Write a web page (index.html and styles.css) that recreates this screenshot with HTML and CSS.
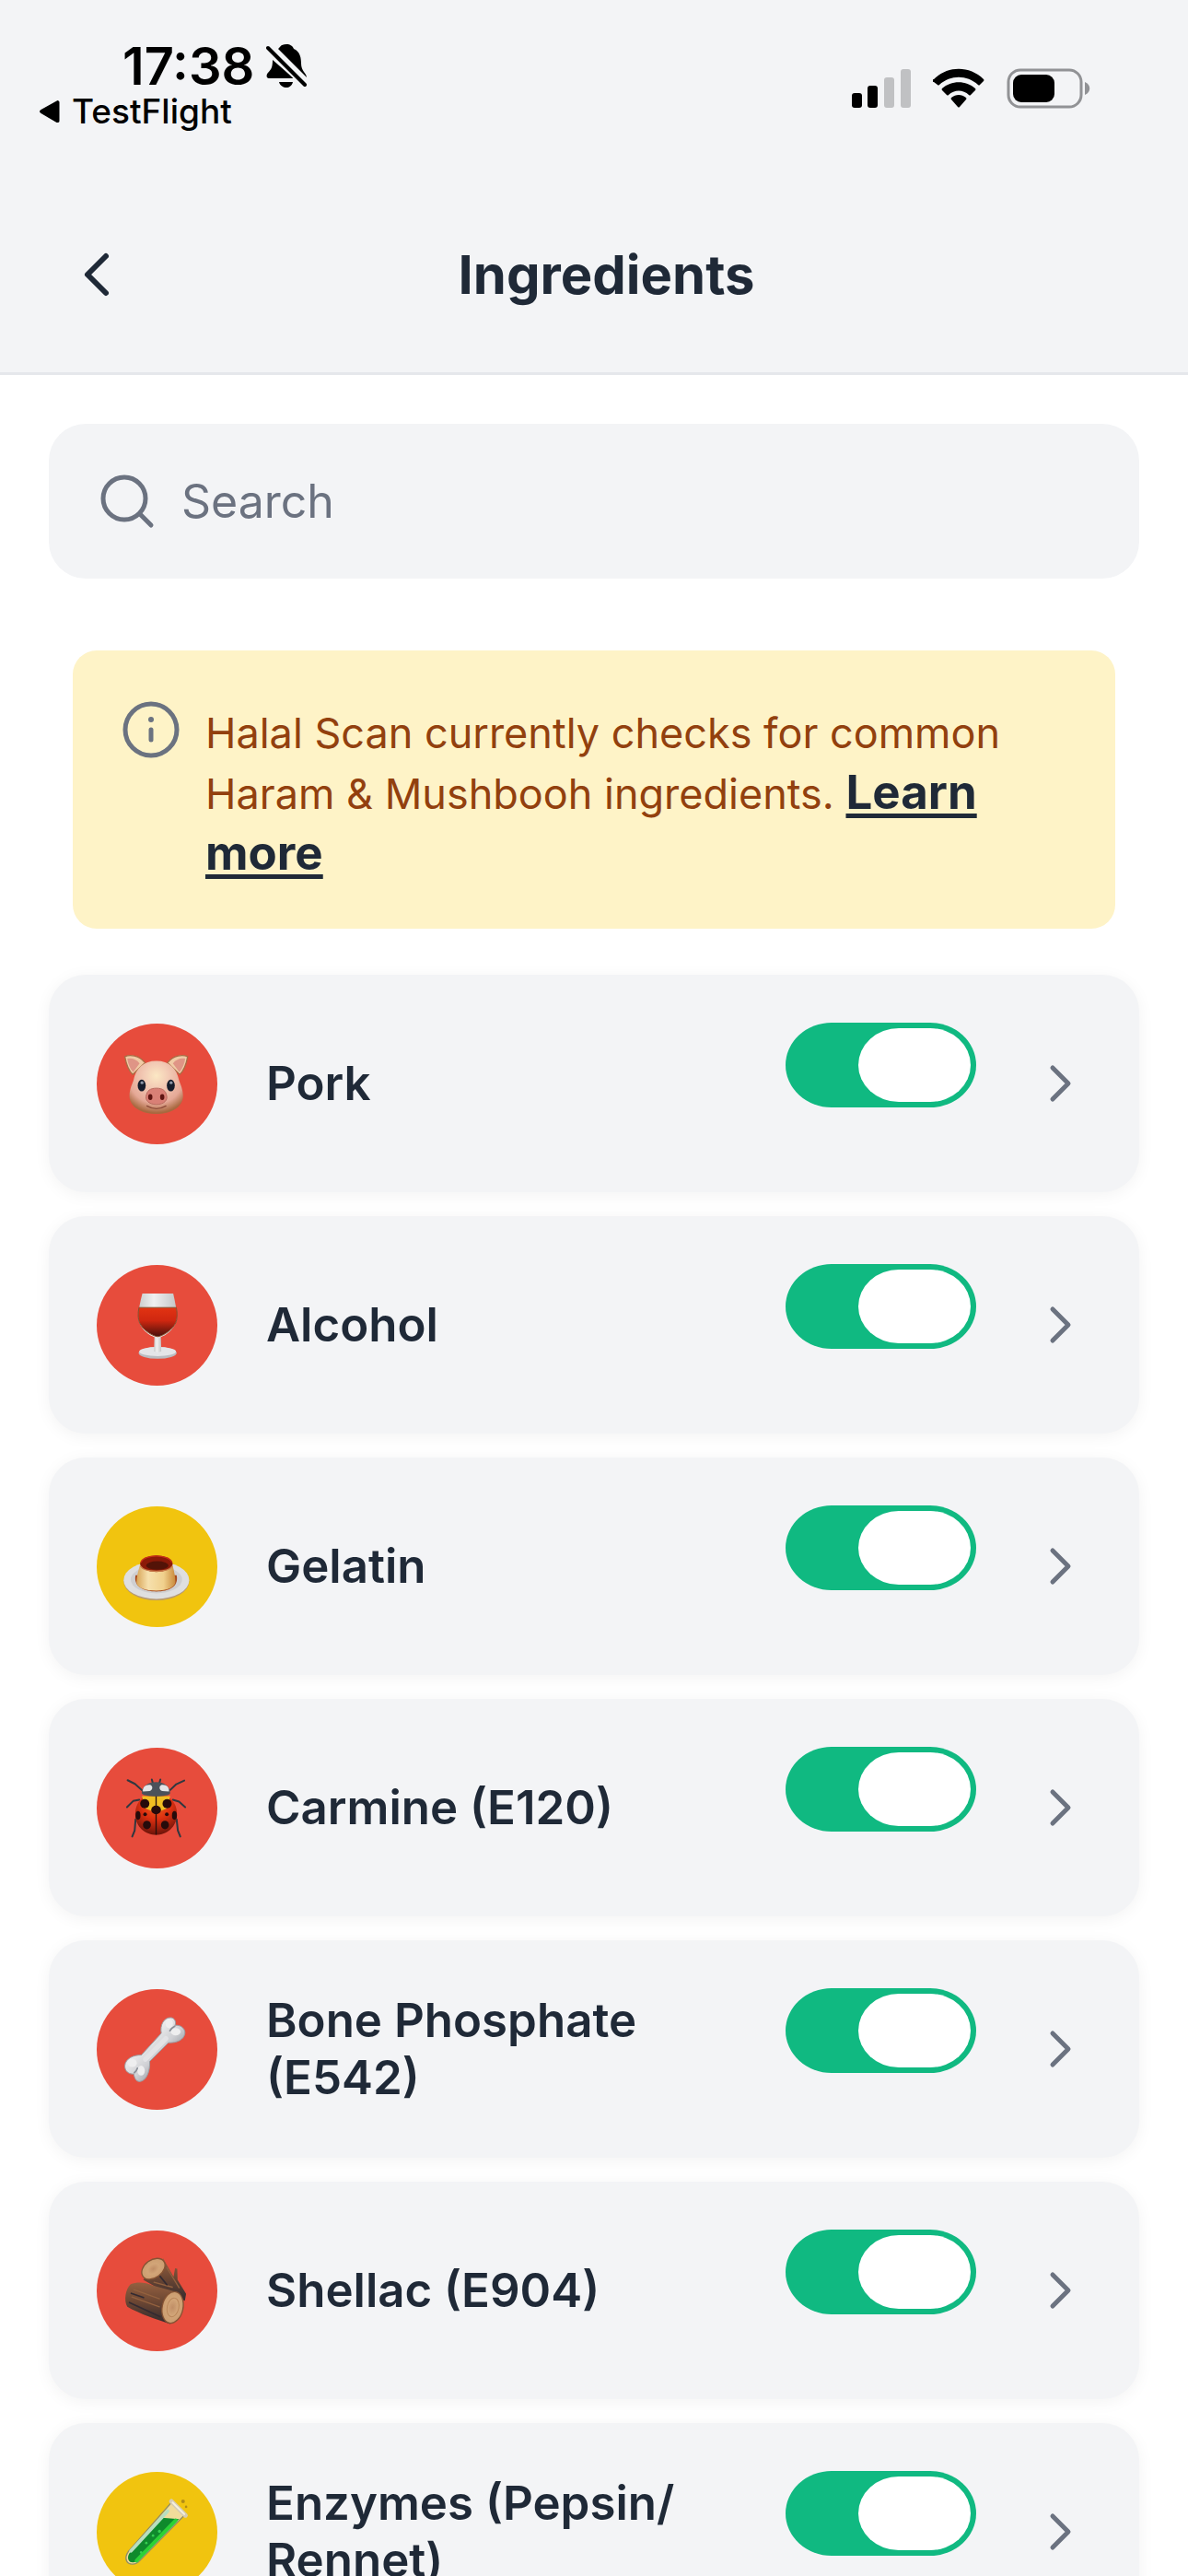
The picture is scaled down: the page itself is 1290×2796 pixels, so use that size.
FILE: index.html
```html
<!DOCTYPE html>
<html lang="en">
<head>
<meta charset="utf-8">
<meta name="viewport" content="width=device-width, initial-scale=1">
<title>Ingredients</title>
<link rel="stylesheet" href="styles.css">
</head>
<body>
<svg class="defs" aria-hidden="true">
  <defs>
    <symbol id="chevron" viewBox="0 0 48 48"><path d="M16 7 33 24 16 41" fill="none" stroke="currentColor" stroke-width="5" stroke-linecap="round" stroke-linejoin="round"/></symbol>
    <radialGradient id="pigSkin" cx=".5" cy=".28" r=".7"><stop offset="0" stop-color="#fbe8c4"/><stop offset=".35" stop-color="#f2c9b4"/><stop offset=".75" stop-color="#e5a896"/><stop offset="1" stop-color="#a8683f"/></radialGradient>
    <linearGradient id="wine" x2="0" y2="1"><stop offset="0" stop-color="#e23312"/><stop offset=".45" stop-color="#cf2710"/><stop offset="1" stop-color="#46100c"/></linearGradient>
    <linearGradient id="glass" x2="1" y2="0"><stop offset="0" stop-color="#c9cbcc"/><stop offset=".4" stop-color="#f0f0f0"/><stop offset="1" stop-color="#c3c5c6"/></linearGradient>
    <linearGradient id="custard" x2="1" y2="0"><stop offset="0" stop-color="#d8a558"/><stop offset=".3" stop-color="#f6e0ad"/><stop offset=".7" stop-color="#f0d08c"/><stop offset="1" stop-color="#c98a3c"/></linearGradient>
    <radialGradient id="shell" cx=".5" cy=".25" r=".75"><stop offset="0" stop-color="#f0651e"/><stop offset=".5" stop-color="#dc2f10"/><stop offset="1" stop-color="#6e140a"/></radialGradient>
    <linearGradient id="bone" x1="0" y1="0" x2="1" y2="1"><stop offset=".3" stop-color="#f4f4f4"/><stop offset=".55" stop-color="#cfd0d4"/><stop offset=".8" stop-color="#80858d"/></linearGradient>
    <linearGradient id="bark" x2="0" y2="1"><stop offset="0" stop-color="#946040"/><stop offset=".45" stop-color="#6d4733"/><stop offset="1" stop-color="#332a2e"/></linearGradient>
    <radialGradient id="rings"><stop offset="0" stop-color="#c08e66"/><stop offset=".5" stop-color="#d2a578"/><stop offset="1" stop-color="#cb9d70"/></radialGradient>
  </defs>
</svg>

<div class="app">
  <header class="header">
    <div class="status">
      <div class="status-left">
        <div class="clock">
          <span>17:38</span>
          <svg class="bell" viewBox="0 0 44 48" aria-hidden="true">
            <path d="M22 0c4 0 7 2 8 5 7 3 8 10 8 16 0 8 6 11 6 15L13 5c2-1 2-5 9-5ZM7 17 30 37H3c-3 0-3-4-1-6 4-4 5-7 5-14ZM14 41h15c-1 4-4 6-7 6s-7-2-8-6Z"/>
            <path d="M2 4 42 44" fill="none" stroke="#f3f4f6" stroke-width="8"/>
            <path d="M2 4 42 44" fill="none" stroke="#000" stroke-width="4" stroke-linecap="round"/>
          </svg>
        </div>
        <a class="return" href="#testflight">
          <svg class="return-icon" viewBox="0 0 22 24" aria-hidden="true"><path d="M20 0c1 0 2 1 2 2v20c0 2-1 2-3 2L2 14c-2-1-2-3 0-4Z"/></svg>
          TestFlight
        </a>
      </div>
      <div class="status-right">
        <svg class="signal" viewBox="0 0 64 44" aria-hidden="true">
          <rect x="0" y="27" width="11" height="16" rx="3"/><rect x="17" y="19" width="11" height="24" rx="3"/>
          <g fill="#c0c1c3"><rect x="35" y="10" width="11" height="33" rx="3"/><rect x="53" y="1" width="11" height="42" rx="3"/></g>
        </svg>
        <svg class="wifi" viewBox="0 0 56 44" aria-hidden="true">
          <path d="M1 15a1.500 1.500 0 0 1 0-3C16-3 40-3 55 12a1.500 1.500 0 0 1 0 2L51 18q-1 1-2 0C37 7 19 7 7 18q-1 1-2 0Z"/>
          <path d="M10 24q-1-1 0-2C20 13 36 13 46 22q1 1 0 2L41 29q-1 1-2 0C33 23 23 23 17 29q-1 1-2 0Z"/>
          <path d="M20 34q-1-1 0-2c5-4 11-4 16 0q1 1 0 2l-7 8q-1 1-2 0Z"/>
        </svg>
        <svg class="battery" viewBox="0 0 92 44" aria-hidden="true">
          <rect x="2" y="2" width="79" height="40" rx="13" fill="none" stroke="#919295" stroke-width="3"/>
          <rect x="7" y="7" width="45" height="30" rx="9"/>
          <path d="M85 15c7 3 7 11 0 14Z" fill="#919295"/>
        </svg>
      </div>
    </div>
    <nav class="nav">
      <button class="back" type="button" aria-label="Back">
        <svg class="back-icon" viewBox="0 0 80 80" aria-hidden="true"><path d="M49 20 29 40 49 60" fill="none" stroke="currentColor" stroke-width="6" stroke-linecap="round" stroke-linejoin="round"/></svg>
      </button>
      <h1 class="title">Ingredients</h1>
    </nav>
  </header>

  <main class="content">
    <label class="search">
      <svg class="search-icon" viewBox="0 0 64 64" aria-hidden="true"><g fill="none" stroke="currentColor" stroke-width="5" stroke-linecap="round"><circle cx="30" cy="29" r="23"/><path d="m47 46 12 12"/></g></svg>
      <input class="search-input" type="search" placeholder="Search" aria-label="Search">
    </label>

    <section class="notice">
      <svg class="notice-icon" viewBox="0 0 64 64" aria-hidden="true"><g fill="none" stroke="currentColor" stroke-width="5" stroke-linecap="round"><circle cx="32" cy="33" r="28"/><path d="M32 33v11"/></g><circle cx="32" cy="22" r="3" fill="currentColor"/></svg>
      <p class="notice-text">Halal Scan currently checks for common Haram &amp; Mushbooh ingredients. <a class="learn" href="#learn">Learn more</a></p>
    </section>

    <ul class="list">
      <li class="card">
        <svg class="badge haram" viewBox="0 0 394 394" aria-hidden="true">
          <path d="M92 108c16-8 46-5 66 20l-40 38c-12-10-22-36-26-58ZM297 108c-16-8-46-5-66 20l40 38c12-10 22-36 26-58Z" fill="#f0cba6" stroke="#a86d45" stroke-width="4"/>
          <path d="M100 114c15-3 30 2 40 16l-21 29c-10-12-17-28-19-45ZM289 114c-15-3-30 2-40 16l21 29c10-12 17-28 19-45Z" fill="#df9586"/>
          <path d="M195 122c42 0 66 24 74 64 5 14 13 30 13 50 0 36-38 59-87 59s-88-23-88-59c0-20 8-36 13-50 8-40 33-64 75-64Z" fill="url(#pigSkin)"/>
          <g fill="#151c2b"><ellipse cx="147" cy="202" rx="13" ry="19"/><ellipse cx="242" cy="202" rx="13" ry="19"/></g>
          <g fill="#8d98a8"><circle cx="148" cy="193" r="5"/><circle cx="243" cy="193" r="5"/></g>
          <path d="M164 269q31 18 62 0" fill="none" stroke="#8e4c3a" stroke-width="4" stroke-linecap="round"/>
          <path d="M195 211c22 0 30 9 33 23 5 15-7 30-33 30s-38-15-33-30c3-14 11-23 33-23Z" fill="#d98076" stroke="#b96a5e" stroke-width="3"/>
          <g fill="#5e1512"><ellipse cx="175" cy="240" rx="7" ry="10"/><ellipse cx="214" cy="240" rx="7" ry="10"/></g>
        </svg>
        <label class="name" for="pork">Pork</label>
        <input class="toggle" type="checkbox" role="switch" id="pork" checked>
        <button class="more" type="button" aria-label="Pork details"><svg class="more-icon" aria-hidden="true"><use href="#chevron"/></svg></button>
      </li>
      <li class="card">
        <svg class="badge haram" viewBox="0 0 394 394" aria-hidden="true">
          <ellipse cx="199" cy="287" rx="62" ry="19" fill="#b9bcc1"/><ellipse cx="199" cy="283" rx="60" ry="15" fill="#e4e5e8"/>
          <path d="M189 220h20l2 62q-12 6-24 0Z" fill="url(#glass)"/>
          <path d="M149 93h101c6 28 12 54 12 78 0 36-42 64-53 64h-20c-11 0-53-28-53-64 0-24 6-50 13-78Z" fill="url(#glass)"/>
          <path d="M138 139h122c4 20 3 38-2 50-9 21-40 43-59 45-19-2-50-24-59-45-5-12-6-30-2-50Z" fill="url(#wine)" stroke="#87502e" stroke-width="3"/>
        </svg>
        <label class="name" for="alcohol">Alcohol</label>
        <input class="toggle" type="checkbox" role="switch" id="alcohol" checked>
        <button class="more" type="button" aria-label="Alcohol details"><svg class="more-icon" aria-hidden="true"><use href="#chevron"/></svg></button>
      </li>
      <li class="card">
        <svg class="badge mushbooh" viewBox="45 45 394 394" aria-hidden="true">
          <ellipse cx="240" cy="289" rx="107" ry="63" fill="#b79a72"/>
          <ellipse cx="240" cy="286" rx="107" ry="61" fill="#dfdfe0"/>
          <ellipse cx="240" cy="284" rx="84" ry="45" fill="#cfcfd1"/>
          <path d="M172 270c-8 38 28 53 68 53s74-15 66-53Z" fill="#a8481a"/>
          <path d="M187 233c-6 22-12 43-12 60 0 18 30 27 65 27s62-10 62-28c0-18-5-38-10-59Z" fill="url(#custard)"/>
          <ellipse cx="240" cy="232" rx="53" ry="27" fill="#8c1a08"/>
          <ellipse cx="243" cy="238" rx="36" ry="14" fill="#531307"/>
          <path d="M190 228c8-28 92-28 100 0" fill="none" stroke="#c92f1a" stroke-width="4"/>
          <path d="M188 240c14 22 90 22 104 0" fill="none" stroke="#c97a49" stroke-width="4"/>
        </svg>
        <label class="name" for="gelatin">Gelatin</label>
        <input class="toggle" type="checkbox" role="switch" id="gelatin" checked>
        <button class="more" type="button" aria-label="Gelatin details"><svg class="more-icon" aria-hidden="true"><use href="#chevron"/></svg></button>
      </li>
      <li class="card">
        <svg class="badge haram" viewBox="45 54 394 394" aria-hidden="true">
          <g fill="none" stroke="#2f3840" stroke-width="6" stroke-linecap="round" stroke-linejoin="round">
            <path d="m192 192-22-20-24-12M285 192l20-19 26-12M184 224l-20 4-20 20M294 224l20 6 20 18M172 288l-3 36-8 20M306 288l4 36 8 20M229 172l-4-14M249 172l4-14"/>
          </g>
          <path d="M239 205c45 0 68 28 68 66 0 42-34 67-68 67s-68-25-68-67c0-38 23-66 68-66Z" fill="url(#shell)"/>
          <path d="M193 212h92l-10 40-36 14-36-14Z" fill="#f0be22"/>
          <path d="M239 208v130" stroke="#26100d" stroke-width="4"/>
          <path d="M192 202c0-22 22-36 47-36s46 14 46 36c0 14-92 14-93 0Z" fill="#4b515a"/>
          <path d="M196 197c-2-14 8-24 24-22 10 4 8 18-2 20ZM281 197c2-14-8-24-24-22-10 4-8 18 2 20Z" fill="#e4e4e6"/>
          <g fill="#260b0b"><circle cx="202" cy="237" r="15"/><circle cx="275" cy="237" r="15"/><ellipse cx="239" cy="257" rx="16" ry="14"/><circle cx="203" cy="271" r="6"/><circle cx="274" cy="271" r="6"/><ellipse cx="209" cy="306" rx="13" ry="14"/><ellipse cx="268" cy="306" rx="13" ry="14"/><ellipse cx="180" cy="275" rx="8" ry="14"/><ellipse cx="299" cy="275" rx="8" ry="14"/></g>
        </svg>
        <label class="name" for="carmine">Carmine (E120)</label>
        <input class="toggle" type="checkbox" role="switch" id="carmine" checked>
        <button class="more" type="button" aria-label="Carmine details"><svg class="more-icon" aria-hidden="true"><use href="#chevron"/></svg></button>
      </li>
      <li class="card">
        <svg class="badge haram" viewBox="45 61 394 394" aria-hidden="true">
          <path d="M256 205c-5-26 8-51 30-51 14 0 19 14 15 25 22-2 34 14 32 27-4 21-26 31-54 30l-61 61c2 29-9 64-33 66-12 0-17-13-19-25-16 2-30-10-29-27 2-24 29-35 54-35Z" fill="url(#bone)" stroke="#9a9da3" stroke-width="3"/>
          <path d="M204 290 271 222" stroke="#e3e3e6" stroke-width="16" stroke-linecap="round"/>
          <g fill="#eeeeef"><ellipse cx="282" cy="174" rx="12" ry="15"/><ellipse cx="303" cy="200" rx="16" ry="12"/><ellipse cx="161" cy="302" rx="15" ry="13"/><ellipse cx="190" cy="327" rx="12" ry="16"/></g>
          <path d="M300 182c-6 3-12 8-16 15M168 334c4-3 8-8 10-15" fill="none" stroke="#8b9098" stroke-width="5" stroke-linecap="round"/>
        </svg>
        <label class="name" for="bone-phosphate">Bone Phosphate (E542)</label>
        <input class="toggle" type="checkbox" role="switch" id="bone-phosphate" checked>
        <button class="more" type="button" aria-label="Bone Phosphate details"><svg class="more-icon" aria-hidden="true"><use href="#chevron"/></svg></button>
      </li>
      <li class="card">
        <svg class="badge haram" viewBox="45 69 394 394" aria-hidden="true">
          <path d="m262 160 34 60 5-28 7 2 1 36 28 46-4 22-58-24-78-44Z" fill="url(#bark)"/>
          <path d="M156 244c22-8 50-6 70 4l75 20-16 106c-44-14-98-32-140-56-12-22-6-58 11-74Z" fill="url(#bark)"/>
          <path d="M166 262 250 292M160 286l90 32M232 238l60 16M274 190l40 66" stroke="#93613f" stroke-width="4" stroke-linecap="round"/>
          <path d="M152 304 252 350M158 274l40 14M250 216l24 30" stroke="#332a31" stroke-width="5" stroke-linecap="round"/>
          <ellipse cx="230" cy="194" rx="42" ry="29" transform="rotate(-36 230 194)" fill="url(#rings)" stroke="#855334" stroke-width="4"/>
          <ellipse cx="293" cy="320" rx="34" ry="52" transform="rotate(12 293 320)" fill="url(#rings)" stroke="#855334" stroke-width="4"/>
          <ellipse cx="294" cy="320" rx="19" ry="31" transform="rotate(12 294 320)" fill="none" stroke="#b98659" stroke-width="3"/>
        </svg>
        <label class="name" for="shellac">Shellac (E904)</label>
        <input class="toggle" type="checkbox" role="switch" id="shellac" checked>
        <button class="more" type="button" aria-label="Shellac details"><svg class="more-icon" aria-hidden="true"><use href="#chevron"/></svg></button>
      </li>
      <li class="card">
        <svg class="badge mushbooh" viewBox="0 0 394 394" aria-hidden="true">
          <path d="m244 100 44 40-148 150c-13 16-36 14-42 1-5-10-1-22 6-32Z" fill="#f2dc9a" stroke="#938e62" stroke-width="4"/>
          <path d="m213 150 56 4-131 132c-12 13-29 12-34 2-4-9-1-18 6-27Z" fill="#0f8a2c"/>
          <path d="M258 158 130 290" stroke="#2bd136" stroke-width="12" stroke-linecap="round"/>
          <path d="M232 128 112 258" stroke="#b6dfc0" stroke-width="11" stroke-linecap="round"/>
          <path d="m244 96 46 46" stroke="#d6ccb4" stroke-width="15" stroke-linecap="round"/><path d="m248 100 38 38" stroke="#f5f0df" stroke-width="6" stroke-linecap="round"/>
          <g fill="#35cf50"><circle cx="205" cy="194" r="5"/><circle cx="184" cy="208" r="4"/><circle cx="162" cy="232" r="4"/><circle cx="145" cy="263" r="4"/></g>
          <g fill="#b38d16"><circle cx="282" cy="96" r="6"/><circle cx="292" cy="114" r="4"/></g>
        </svg>
        <label class="name" for="enzymes">Enzymes (Pepsin/<wbr>Rennet)</label>
        <input class="toggle" type="checkbox" role="switch" id="enzymes" checked>
        <button class="more" type="button" aria-label="Enzymes details"><svg class="more-icon" aria-hidden="true"><use href="#chevron"/></svg></button>
      </li>
    </ul>
  </main>
</div>
</body>
</html>
```
FILE: styles.css
```css
:root {
  --surface: #f3f4f6;
  --ink: #1f2937;
  --muted: #6b7280;
  --gutter: 53px;
}

* {
  box-sizing: border-box;
}

body {
  margin: 0;
  background: #fff;
  color: var(--ink);
  font-family: Inter, "Liberation Sans", sans-serif;
}

button {
  padding: 0;
  border: 0;
  background: none;
  color: inherit;
  font: inherit;
}

svg {
  display: block;
  flex: none;
}

.defs {
  position: absolute;
  width: 0;
  height: 0;
}

.app {
  display: flex;
  flex-direction: column;
  height: 100vh;
}

/* Header */

.header {
  flex: none;
  background: var(--surface);
  border-bottom: 3px solid #e5e7eb;
}

.status {
  display: flex;
  justify-content: space-between;
  align-items: flex-start;
  padding: 40px 105px 0 42px;
  color: #000;
}

.clock {
  display: flex;
  align-items: center;
  gap: 13px;
  padding-left: 91px;
  font-size: 56px;
  font-weight: 600;
  line-height: 64px;
}

.bell {
  width: 44px;
  height: 48px;
}

.return {
  display: flex;
  align-items: center;
  gap: 13px;
  color: inherit;
  font-size: 37px;
  font-weight: 500;
  line-height: 34px;
  text-decoration: none;
}

.return-icon {
  width: 23px;
  height: 24px;
}

.status-right {
  display: flex;
  align-items: center;
  gap: 24px;
  padding-top: 34px;
}

.signal {
  width: 64px;
  height: 44px;
}

.wifi {
  width: 56px;
  height: 44px;
}

.battery {
  width: 92px;
  height: 44px;
}

.nav {
  display: flex;
  align-items: center;
  padding: 120px 132px 66px var(--gutter);
}

.back {
  display: flex;
  justify-content: center;
  width: 106px;
}

.back-icon {
  width: 80px;
  height: 80px;
}

.title {
  flex: 1;
  margin: 0;
  font-size: 58px;
  font-weight: 700;
  line-height: 80px;
  text-align: center;
}

/* Content */

.content {
  flex: 1;
  min-height: 0;
  padding: var(--gutter) var(--gutter) 0;
  overflow-y: auto;
  scrollbar-width: none;
}

.search {
  display: flex;
  align-items: center;
  gap: 28px;
  padding: 52px;
  border-radius: 40px;
  background: var(--surface);
  color: var(--muted);
}

.search-icon {
  width: 64px;
  height: 64px;
}

.search-input {
  flex: 1;
  min-width: 0;
  padding: 0;
  border: 0;
  outline: 0;
  background: none;
  color: var(--ink);
  font: 400 50px/64px Inter, "Liberation Sans", sans-serif;
}

.search-input::placeholder {
  color: var(--muted);
  opacity: 1;
}

.notice {
  display: flex;
  align-items: flex-start;
  gap: 27px;
  margin: 78px 26px 0;
  padding: 53px 53px 48px;
  border-radius: 26px;
  background: #fef3c7;
  color: #92400e;
}

.notice-icon {
  width: 64px;
  height: 64px;
  color: var(--muted);
}

.notice-text {
  flex: 1;
  margin: 0;
  padding-top: 5px;
  font-size: 45px;
  line-height: 64px;
}

.learn {
  color: var(--ink);
  font-size: 51px;
  font-weight: 700;
  text-decoration: underline;
  text-decoration-thickness: 5px;
  text-underline-offset: 5px;
  text-decoration-skip-ink: none;
}

.list {
  display: flex;
  flex-direction: column;
  gap: 26px;
  margin: 0;
  padding: 50px 0 26px;
  list-style: none;
}

.card {
  display: flex;
  align-items: center;
  min-height: 236px;
  padding: 52px;
  border-radius: 40px;
  background: var(--surface);
  box-shadow: 0 3px 18px rgba(0, 0, 0, .05);
}

.badge {
  width: 131px;
  height: 131px;
  border-radius: 50%;
}

.haram {
  background: #e74c3c;
}

.mushbooh {
  background: #f1c40f;
}

.name {
  flex: 1;
  padding: 0 53px;
  font-size: 51px;
  font-weight: 600;
  line-height: 62px;
}

.toggle {
  flex: none;
  align-self: flex-start;
  appearance: none;
  width: 207px;
  height: 92px;
  margin: 0;
  padding: 6px;
  border-radius: 50px / 46px;
  background: #d1d5db;
}

.toggle::before {
  content: "";
  display: block;
  width: 122px;
  height: 80px;
  border-radius: 44px / 40px;
  background: #fff;
}

.toggle:checked {
  background: #10b981;
}

.toggle:checked::before {
  margin-left: auto;
}

.more {
  margin: 0 10px 0 67px;
  color: var(--muted);
}

.more-icon {
  width: 48px;
  height: 48px;
}
```
